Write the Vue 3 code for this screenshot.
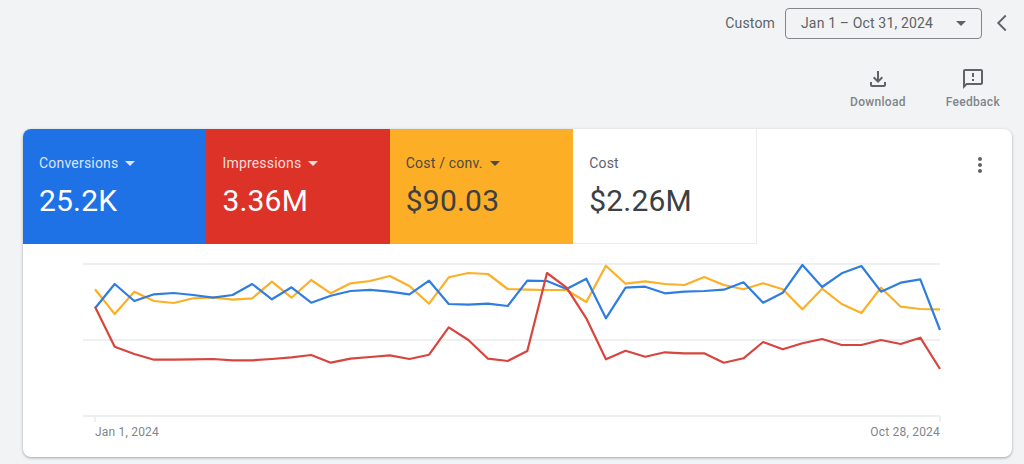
<script setup>
import { computed } from "vue";

const tabs = [
  { label: "Conversions", value: "25.2K", cls: "is-blue", caret: true },
  { label: "Impressions", value: "3.36M", cls: "is-red", caret: true },
  { label: "Cost / conv.", value: "$90.03", cls: "is-yellow", caret: true },
  { label: "Cost", value: "$2.26M", cls: "is-plain", caret: false },
];

const blue = [
  308.3, 284, 301, 294.3, 293, 295, 297.7, 295, 284, 299.3, 287.3, 302.7, 295.7, 291, 289.8,
  291.7, 294.3, 280.7, 304, 304.7, 303.7, 306, 280.7, 281, 289, 278.7, 318.3, 287.7, 286.7,
  293.3, 291.7, 291, 289.7, 282.3, 302.7, 292.7, 265, 287, 273.3, 266, 291.7, 282.7, 279.3, 330,
];
const orange = [
  289.3, 314, 291.7, 301, 303, 298.3, 297.3, 299.7, 298.3, 281.7, 297.7, 280, 293.3, 283.3, 281,
  276, 286, 303.7, 277.3, 273, 274, 289, 289.7, 290, 290, 302, 265.7, 283.7, 281.3,
  284, 285, 277, 285, 289.3, 283.3, 289.3, 309.3, 288.7, 304, 313, 287.7, 306.7, 309, 309.3,
];
const red = [
  306.7, 346.7, 354, 359.7, 359.7, 359.3, 359, 360.3, 360.3, 359, 357.3, 355, 362.7, 358.7, 357,
  355.3, 359, 354.7, 327.3, 340, 358.7, 361, 351, 273, 287.7, 318.3, 359.3, 350.7, 356.7,
  352.3, 353.3, 353.3, 362.7, 358.3, 342, 349.3, 343.3, 339, 345, 345, 340, 344, 337.7, 369,
];

// chart uses page coordinates through its viewBox, 44 samples between x=95 and x=940
const toPoints = (ys) =>
  ys.map((y, i) => `${(95 + (845 / 43) * i).toFixed(1)},${y}`).join(" ");

const series = computed(() => [
  { name: "cost", color: "#fbb027", points: toPoints(orange) },
  { name: "conversions", color: "#2f7de1", points: toPoints(blue) },
  { name: "impressions", color: "#d8453e", points: toPoints(red) },
]);
</script>

<template>
  <div class="page">
    <div class="range-row">
      <span class="range-label">Custom</span>
      <button type="button" class="range-btn">
        <span>Jan 1 – Oct 31, 2024</span>
        <i class="caret"></i>
      </button>
      <svg class="chevron" viewBox="0 0 24 24" width="30" height="30" aria-hidden="true">
        <path d="M15 6l-6 6 6 6" />
      </svg>
    </div>

    <div class="actions">
      <div class="action">
        <svg viewBox="0 0 24 24" width="24" height="24" aria-hidden="true">
          <path d="M18 15v3H6v-3H4v3c0 1.1.9 2 2 2h12c1.1 0 2-.9 2-2v-3h-2zm-1-4l-1.41-1.41L13 12.17V4h-2v8.17L8.41 9.59 7 11l5 5 5-5z" />
        </svg>
        <span>Download</span>
      </div>
      <div class="action">
        <svg viewBox="0 0 24 24" width="24" height="24" aria-hidden="true">
          <path d="M20 2H4c-1.1 0-2 .9-2 2v18l4-4h14c1.1 0 2-.9 2-2V4c0-1.1-.9-2-2-2zm0 14H5.17L4 17.17V4h16v12zm-9-4h2v2h-2zm0-6h2v4h-2z" />
        </svg>
        <span>Feedback</span>
      </div>
    </div>

    <section class="card">
      <div class="tabs">
        <div v-for="tab in tabs" :key="tab.label" class="tab" :class="tab.cls">
          <div class="tab-label">
            {{ tab.label }}
            <i v-if="tab.caret" class="caret"></i>
          </div>
          <div class="tab-value">{{ tab.value }}</div>
        </div>
        <div class="tab-rest">
          <svg viewBox="0 0 24 24" width="24" height="24" aria-hidden="true">
            <path d="M12 8c1.1 0 2-.9 2-2s-.9-2-2-2-2 .9-2 2 .9 2 2 2zm0 2c-1.1 0-2 .9-2 2s.9 2 2 2 2-.9 2-2-.9-2-2-2zm0 6c-1.1 0-2 .9-2 2s.9 2 2 2 2-.9 2-2-.9-2-2-2z" />
          </svg>
        </div>
      </div>

      <svg class="chart" viewBox="23 244 989 213" width="989" height="213">
        <g class="grid">
          <line x1="83" y1="264" x2="940" y2="264" />
          <line x1="83" y1="340" x2="940" y2="340" />
          <line x1="83" y1="416" x2="940" y2="416" />
          <line x1="95" y1="416" x2="95" y2="422" />
          <line x1="940" y1="416" x2="940" y2="422" />
        </g>
        <polyline
          v-for="s in series"
          :key="s.name"
          :points="s.points"
          :stroke="s.color"
          class="line"
        />
        <text x="95" y="436" class="tick">Jan 1, 2024</text>
        <text x="940" y="436" class="tick" text-anchor="end">Oct 28, 2024</text>
      </svg>
    </section>
  </div>
</template>

<style scoped>
.page {
  width: 1024px;
  height: 464px;
  box-sizing: border-box;
  overflow: hidden;
  background: #f1f3f4;
  padding-top: 8px;
  font-family: Roboto, "Liberation Sans", sans-serif;
  color: #5f6368;
}

.range-row {
  display: flex;
  align-items: center;
  justify-content: flex-end;
  height: 30px;
  padding-right: 7px;
}
.range-label {
  font-size: 14px;
  letter-spacing: 0.15px;
  margin-right: 10px;
}
.range-btn {
  display: flex;
  align-items: center;
  justify-content: space-between;
  width: 197px;
  height: 31px;
  box-sizing: border-box;
  padding: 0 9px 0 15px;
  border: 1px solid #80868b;
  border-radius: 4px;
  background: transparent;
  font: inherit;
  font-size: 14px;
  letter-spacing: 0.15px;
  color: #5f6368;
}
.chevron {
  margin-left: 5px;
  fill: none;
  stroke: #5f6368;
  stroke-width: 1.5;
}

.caret {
  display: inline-block;
  width: 0;
  height: 0;
  border-left: 5px solid transparent;
  border-right: 5px solid transparent;
  border-top: 5px solid currentColor;
}
.range-btn .caret {
  margin-right: 6px;
}

.actions {
  display: flex;
  justify-content: flex-end;
  height: 62px;
  margin-top: 29px;
  padding-right: 24px;
  gap: 40px;
}
.action {
  display: flex;
  flex-direction: column;
  align-items: center;
  gap: 4px;
  font-size: 12px;
  font-weight: 500;
  letter-spacing: 0.3px;
  color: #80868b;
}
.action svg {
  fill: #5f6368;
}

.card {
  width: 989px;
  height: 328px;
  margin-left: 23px;
  overflow: hidden;
  border-radius: 8px;
  background: #fff;
  box-shadow: 0 1px 2px rgba(60, 64, 67, 0.3), 0 1px 3px 1px rgba(60, 64, 67, 0.1);
}

.tabs {
  display: flex;
  height: 115px;
}
.tab {
  width: 183.4px;
  box-sizing: border-box;
  padding: 26px 16px 0;
}
.tab-label {
  display: flex;
  align-items: center;
  gap: 7px;
  height: 16px;
  font-size: 14px;
  letter-spacing: 0.2px;
}
.tab-value {
  margin-top: 12px;
  font-size: 30px;
  line-height: 36px;
  letter-spacing: 0.2px;
}
.is-blue {
  background: #1f71e6;
  color: #fff;
}
.is-blue .tab-label {
  color: #d9e6fb;
}
.is-red {
  background: #dc3228;
  color: #fff;
}
.is-red .tab-label {
  color: #fbdcda;
}
.is-yellow {
  background: #fdae27;
  color: #3c4043;
}
.is-yellow .tab-label {
  color: #4d4b3f;
}
.is-plain {
  color: #3c4043;
  border-right: 1px solid #ebedef;
  border-bottom: 1px solid #ebedef;
}
.is-plain .tab-label {
  color: #5f6368;
}
.tab-rest {
  flex: 1;
  display: flex;
  justify-content: flex-end;
  padding: 24px 20px 0 0;
}
.tab-rest svg {
  fill: #5f6368;
}

.chart {
  display: block;
}
.grid line {
  stroke: #e8eaed;
  stroke-width: 1.5;
}
.line {
  fill: none;
  stroke-width: 2.2;
  stroke-linejoin: round;
}
.tick {
  font-size: 12px;
  letter-spacing: 0.2px;
  fill: #80868b;
}
</style>

<style>
html,
body {
  margin: 0;
  background: #f1f3f4;
}
</style>
